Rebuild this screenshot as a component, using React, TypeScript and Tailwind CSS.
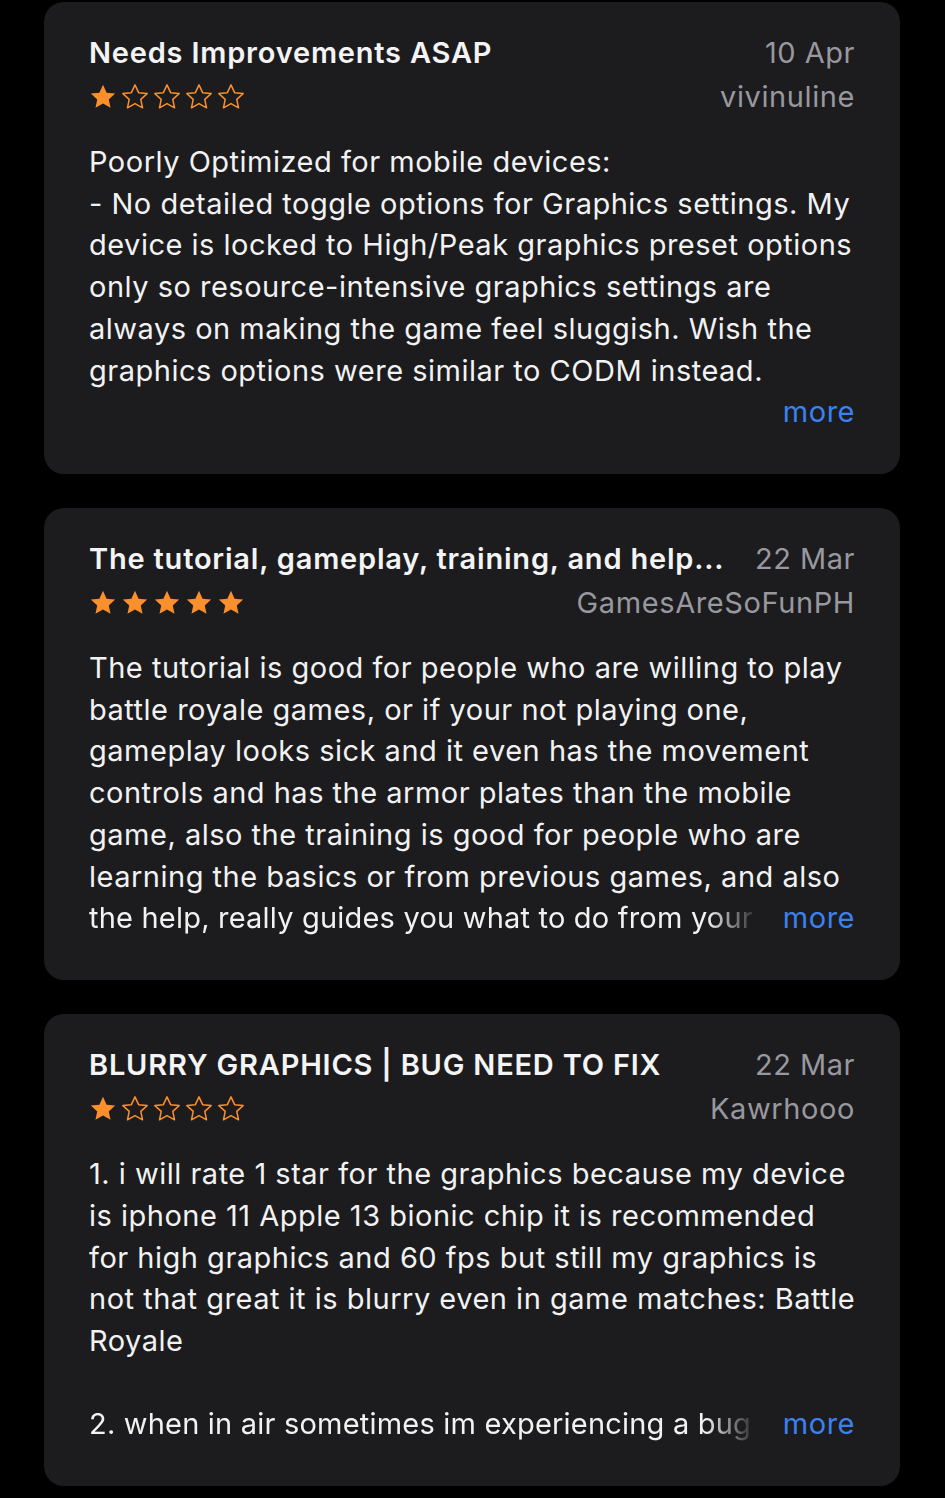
import React from "react";

const STAR = "M12 1.6l3.1 6.7 7.3.8-5.45 4.95 1.52 7.2L12 17.65l-6.47 3.6 1.52-7.2L1.6 9.1l7.3-.8z";

function Stars({ n }: { n: number }) {
  return (
    <div className="flex items-center gap-[4px]">
      {[0, 1, 2, 3, 4].map((i) => (
        <svg key={i} width="28" height="28" viewBox="0 0 24 24">
          {i < n ? (
            <path d={STAR} fill="#fa8f2c" />
          ) : (
            <path d={STAR} fill="none" stroke="#fa8f2c" strokeWidth="1.3" strokeLinejoin="round" />
          )}
        </svg>
      ))}
    </div>
  );
}

type Review = {
  title: string;
  date: string;
  user: string;
  stars: number;
  lines: string[];
  last: string | null;
};

const reviews: Review[] = [
  {
    title: "Needs Improvements ASAP",
    date: "10 Apr",
    user: "vivinuline",
    stars: 1,
    lines: [
      "Poorly Optimized for mobile devices:",
      "- No detailed toggle options for Graphics settings. My",
      "device is locked to High/Peak graphics preset options",
      "only so resource-intensive graphics settings are",
      "always on making the game feel sluggish. Wish the",
      "graphics options were similar to CODM instead.",
    ],
    last: null,
  },
  {
    title: "The tutorial, gameplay, training, and help...",
    date: "22 Mar",
    user: "GamesAreSoFunPH",
    stars: 5,
    lines: [
      "The tutorial is good for people who are willing to play",
      "battle royale games, or if your not playing one,",
      "gameplay looks sick and it even has the movement",
      "controls and has the armor plates than the mobile",
      "game, also the training is good for people who are",
      "learning the basics or from previous games, and also",
    ],
    last: "the help, really guides you what to do from your",
  },
  {
    title: "BLURRY GRAPHICS | BUG NEED TO FIX",
    date: "22 Mar",
    user: "Kawrhooo",
    stars: 1,
    lines: [
      "1. i will rate 1 star for the graphics because my device",
      "is iphone 11 Apple 13 bionic chip it is recommended",
      "for high graphics and 60 fps but still my graphics is",
      "not that great it is blurry even in game matches: Battle",
      "Royale",
      "\u00a0",
    ],
    last: "2. when in air sometimes im experiencing a bug",
  },
];

function Card({ r }: { r: Review }) {
  return (
    <div className="rounded-[20px] bg-[#1c1c1e] px-[45px] pt-[29px] pb-[41px]">
      <div className="flex h-[44px] items-center justify-between gap-6">
        <div className="truncate text-[29px] font-semibold tracking-[0.8px] text-[#f4f4f5]">{r.title}</div>
        <div className="shrink-0 text-[29px] tracking-[0.5px] text-[#98989e]">{r.date}</div>
      </div>
      <div className="flex h-[44px] items-center justify-between">
        <Stars n={r.stars} />
        <div className="text-[29px] tracking-[0.6px] text-[#98989e]">{r.user}</div>
      </div>
      <div className="mt-[22px] text-[29px] leading-[41.72px] tracking-[0.5px] text-[#f2f2f2]">
        {r.lines.map((l, i) => (
          <div key={i} className="whitespace-nowrap">{l}</div>
        ))}
        {r.last === null ? (
          <div className="text-right text-[#3b82f0]">more</div>
        ) : (
          <div className="flex items-center justify-between gap-[16px]">
            <span className="whitespace-nowrap tracking-[0.2px] [mask-image:linear-gradient(to_left,rgba(0,0,0,0.12)_0px,black_46px)]">
              {r.last}
            </span>
            <span className="shrink-0 text-[#3b82f0]">more</span>
          </div>
        )}
      </div>
    </div>
  );
}

export default function App() {
  return (
    <div className="min-h-[1498px] bg-black pl-[44px] pr-[45px] pt-[2px] font-['Inter','Noto_Sans',sans-serif] antialiased">
      <div className="flex flex-col gap-[34px]">
        {reviews.map((r, i) => (
          <Card key={i} r={r} />
        ))}
      </div>
    </div>
  );
}
